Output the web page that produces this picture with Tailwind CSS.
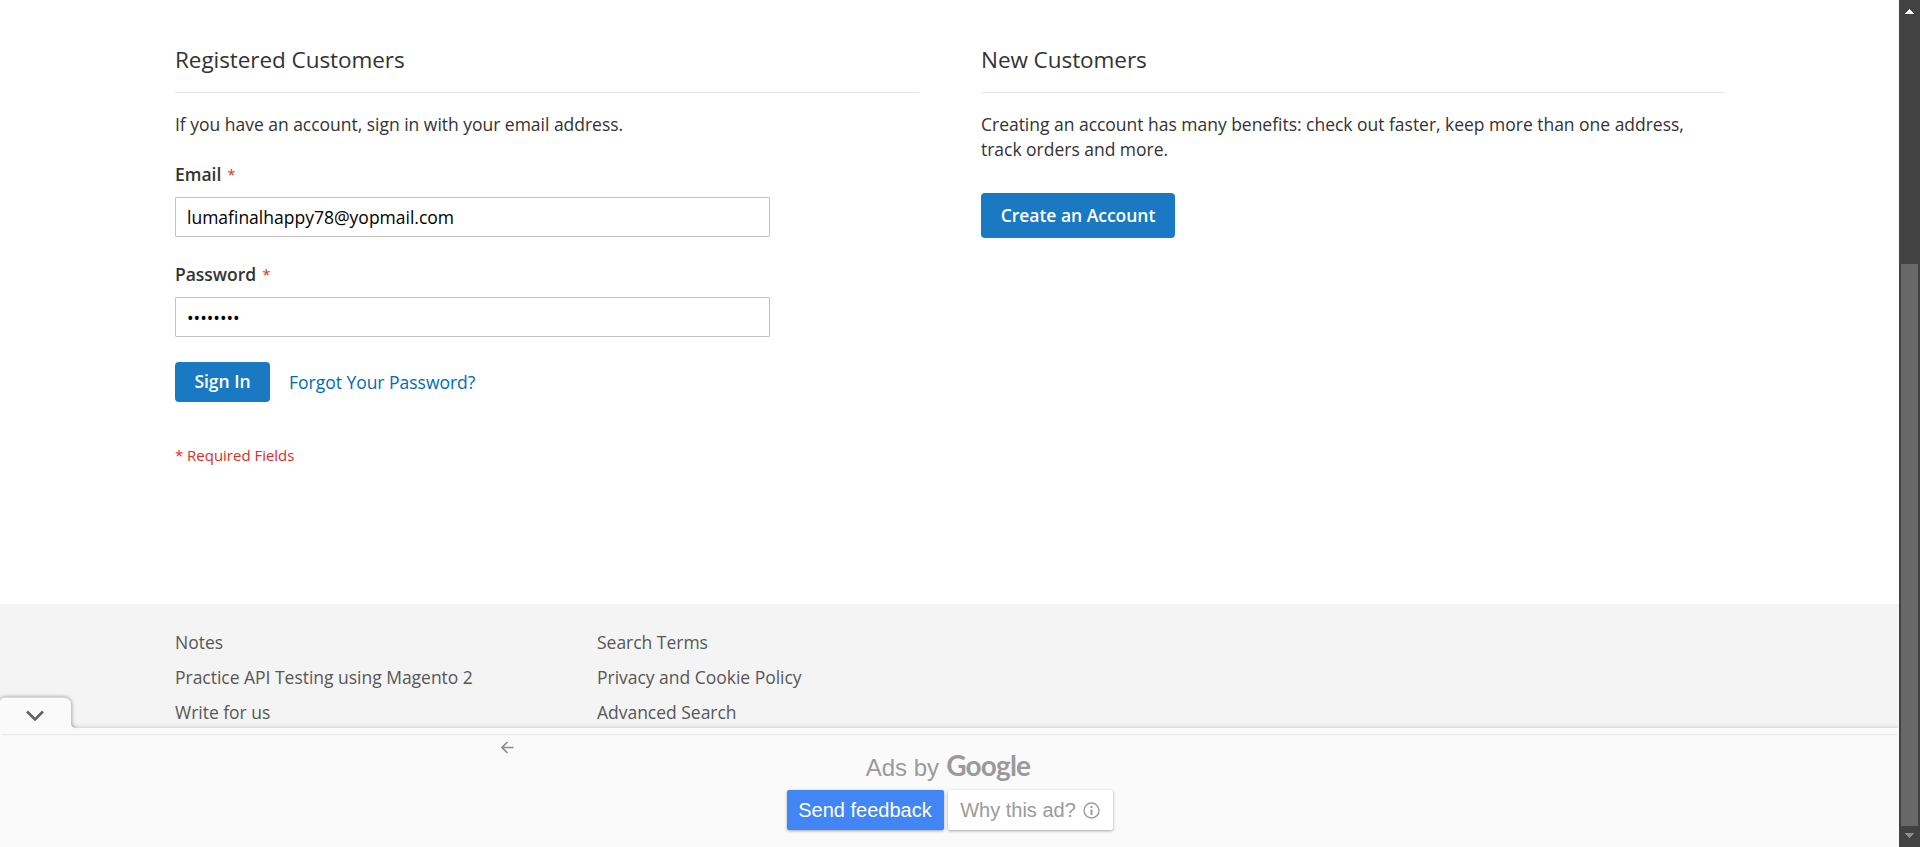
<!DOCTYPE html>
<html lang="en">
<head>
<meta charset="utf-8">
<title>Customer Login</title>
<script src="https://cdn.jsdelivr.net/npm/@tailwindcss/browser@4"></script>
</head>
<body class="h-[847px] w-[1920px] overflow-hidden bg-white font-['Open_Sans',sans-serif] text-[17.5px] leading-[25px] tracking-[-0.02px] text-[#333]">
<div class="flex h-full">
  <div class="relative flex h-full w-[1899px] flex-col overflow-hidden">
    <main class="flex h-[604px] shrink-0 gap-[62px] pl-[175px] pt-[47px]">
      <section class="w-[744px]">
        <h2 class="h-[46px] border-b border-[#e6e6e6] text-[22.5px] leading-[26px] tracking-[-0.06px]">Registered Customers</h2>
        <p class="mt-[19px]">If you have an account, sign in with your email address.</p>
        <form>
          <label class="mt-[25px] flex h-[25px] items-center gap-[6px] font-semibold" for="email">Email <span class="text-[15px] font-normal text-[#e02b27]">*</span></label>
          <input id="email" type="text" value="lumafinalhappy78@yopmail.com" class="mt-[10px] block h-10 w-[595px] rounded-[1px] border border-[#c2c2c2] px-[11px] tracking-normal text-black">
          <label class="mt-[25px] flex h-[25px] items-center gap-[6px] font-semibold" for="pass">Password <span class="text-[15px] font-normal text-[#e02b27]">*</span></label>
          <input id="pass" type="password" value="password" class="mt-[10px] block h-10 w-[595px] rounded-[1px] border border-[#c2c2c2] px-[11px] pt-px tracking-normal text-black">
          <div class="mt-[25px] flex items-center gap-[19px]">
            <button type="button" class="h-10 w-[95px] rounded-[4px] bg-[#1979c3] pb-px font-semibold text-white">Sign In</button>
            <a class="text-[#006bb4]">Forgot Your Password?</a>
          </div>
          <p class="mt-[41px] text-[15px] text-[#e02b27]">* Required Fields</p>
        </form>
      </section>
      <section class="w-[744px]">
        <h2 class="h-[46px] border-b border-[#e6e6e6] text-[22.5px] leading-[26px] tracking-[-0.06px]">New Customers</h2>
        <p class="mt-[19px]">Creating an account has many benefits: check out faster, keep more than one address,<br>track orders and more.</p>
        <button type="button" class="mt-[31px] h-[45px] w-[194px] rounded-[4px] bg-[#1979c3] font-semibold text-white">Create an Account</button>
      </section>
    </main>
    <footer class="flex grow bg-[#f4f4f4] pl-[175px] pt-[26px] text-[#575757]">
      <ul class="flex w-[422px] flex-col gap-[10px]"><li>Notes</li><li>Practice API Testing using Magento 2</li><li>Write for us</li></ul>
      <ul class="flex flex-col gap-[10px]"><li>Search Terms</li><li>Privacy and Cookie Policy</li><li>Advanced Search</li></ul>
    </footer>

    <!-- Anchored ad that overlays the foot of the page -->
    <aside class="absolute inset-x-0 bottom-0 h-[119px] bg-[#fafafa] tracking-normal shadow-[0_0_5px_rgba(0,0,0,0.2)]">
      <svg class="absolute -top-[36px] left-0 h-[37px] w-[82px]" viewBox="0 0 82 37" fill="none">
        <path d="M0 9Q1 5.500 5 5.500H63Q71 5.500 71 13V31Q71 36 76 36V37H0Z" fill="#fafafa" class="drop-shadow-[0_0_2px_rgba(0,0,0,0.45)]"/>
        <path d="M27 19.500L35 27.500L43 19.500" stroke="#616161" stroke-width="2.500"/>
      </svg>
      <div class="flex h-full flex-col items-center pt-[6px] font-['Liberation_Sans',Arial,sans-serif]">
        <div class="h-px w-[1895px] shrink-0 bg-[#ececec] shadow-[0_1px_2px_rgba(0,0,0,0.04)]"></div>
        <div class="mt-[14px] flex h-8 items-baseline gap-[7px] pr-[3px] text-[#9a9a9a]">
          <span class="text-[24px] leading-8">Ads by</span>
          <span class="font-['Lato',sans-serif] text-[28px] font-bold leading-8 tracking-[-0.8px]">Google</span>
        </div>
        <div class="mt-[9px] flex gap-1 text-[20px]">
          <button type="button" class="h-10 w-[157px] rounded-[2px] bg-[#4285f4] text-white shadow-[0_1px_3px_rgba(0,0,0,0.35)]">Send feedback</button>
          <button type="button" class="flex h-10 w-[165px] items-center justify-center gap-[7px] rounded-[2px] bg-white text-[#9a9a9a] shadow-[0_1px_3px_rgba(0,0,0,0.35)]">Why this ad?
            <svg class="mt-px h-[17px] w-[17px]" viewBox="0 0 17 17" fill="none" stroke="#9a9a9a"><circle cx="8.500" cy="8.500" r="7.500" stroke-width="1.400"/><path d="M8.500 7.500V13M8.500 4V6" stroke-width="2"/></svg>
          </button>
        </div>
      </div>
      <svg class="absolute left-[501px] top-[13px] h-[13px] w-[13px]" viewBox="0 0 13 13" fill="none" stroke="#8c8c8c" stroke-width="1.700"><path d="M12.500 6.500H1.500M6.500 1L1 6.500L6.500 12"/></svg>
    </aside>
  </div>

  <!-- Scrollbar -->
  <div class="flex w-[21px] flex-col items-center bg-[#424242] pt-[9px]">
    <svg class="h-[5px] w-[9px] shrink-0" viewBox="0 0 9 5" fill="#fff" shape-rendering="crispEdges"><path d="M4.500 0L9 5H0Z"/></svg>
    <div class="mt-[250px] h-[562px] w-[17px] shrink-0 bg-[#686868]"></div>
    <svg class="mt-[7px] h-[5px] w-[9px] shrink-0" viewBox="0 0 9 5" fill="#8b8b8b" shape-rendering="crispEdges"><path d="M0 0H9L4.500 5Z"/></svg>
  </div>
</div>
</body>
</html>
